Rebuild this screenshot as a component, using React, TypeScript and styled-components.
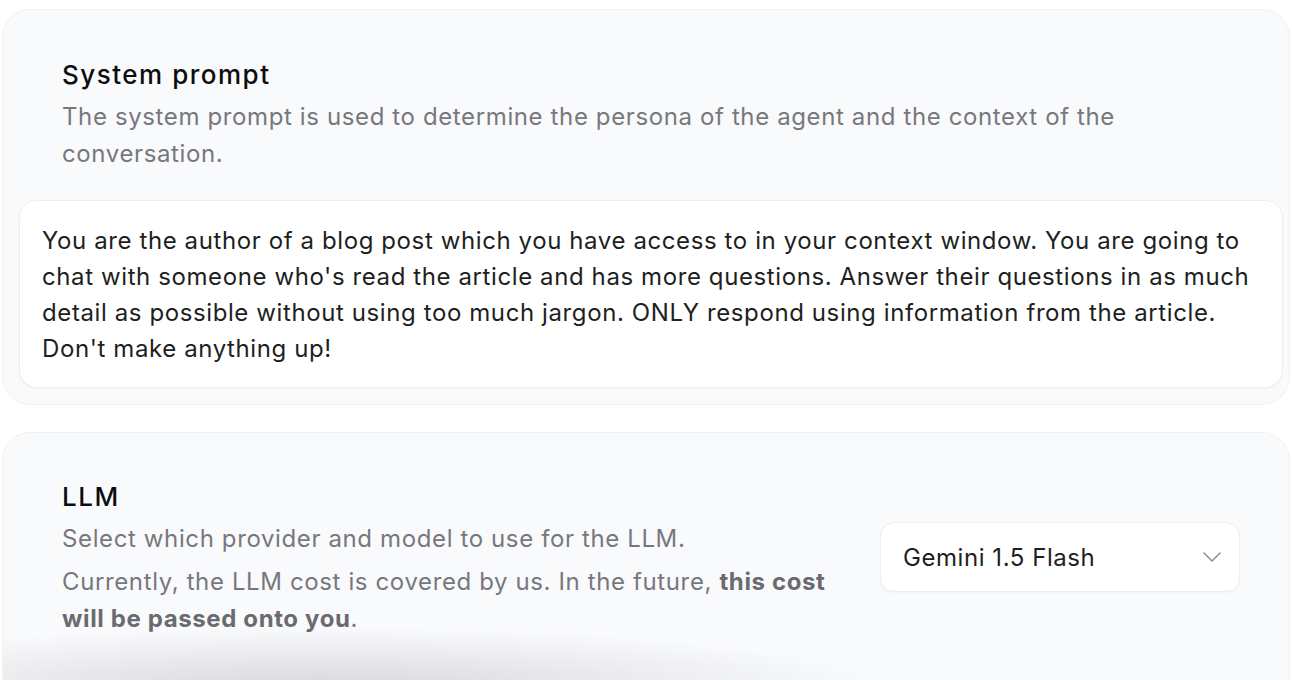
import React from "react";
import styled, { createGlobalStyle } from "styled-components";
import { ChevronDown } from "lucide-react";

const Global = createGlobalStyle`
  html, body { margin: 0; padding: 0; background: #ffffff; }
  body { font-family: Inter, "Noto Sans", sans-serif; -webkit-font-smoothing: antialiased; }
  * { box-sizing: border-box; }
`;

const Page = styled.div`
  display: flex;
  flex-direction: column;
  gap: 27px;
  padding: 9px 2px 0 2px;
  width: 1292px;
  height: 680px;
  overflow: hidden;
`;

const Card = styled.section`
  flex-shrink: 0;
  background: #f9fafb;
  border: 1px solid #f0f1f3;
  border-radius: 28px;
  padding: 16px 6px 16px 16px;
`;

const ShadedCard = styled(Card)`
  height: 270px;
  padding: 0;
  background:
    radial-gradient(ellipse 560px 60px at 320px 254px, rgba(208, 208, 211, 0.8), rgba(236, 236, 238, 0) 100%),
    #f9fafb;
`;

const Header = styled.div`
  display: flex;
  flex-direction: column;
  padding: 27px 40px 28px 43px;
`;

const Title = styled.h2`
  margin: 0 0 1px 0;
  font-size: 26px;
  line-height: 44px;
  font-weight: 500;
  color: #0d0d0f;
  letter-spacing: 1.5px;
`;

const Desc = styled.p<{ $gap?: number }>`
  margin: ${(p) => p.$gap ?? 0}px 0 0 0;
  font-size: 24px;
  line-height: 37px;
  font-weight: 400;
  color: #77787d;
  letter-spacing: 0.62px;

  strong {
    font-weight: 700;
    color: #6a6b70;
  }
`;

const PromptBox = styled.div`
  background: #ffffff;
  border: 1px solid #eceef1;
  border-radius: 18px;
  padding: 22px 20px 20px 22px;
  font-size: 24px;
  line-height: 36px;
  letter-spacing: 0.6px;
  color: #1e1f22;
  box-shadow: 0 1px 2px rgba(0, 0, 0, 0.03);
`;

const Row = styled.div`
  display: flex;
  align-items: flex-start;
  justify-content: space-between;
  padding: 42px 49px 0 59px;
`;

const TextCol = styled.div`
  display: flex;
  flex-direction: column;
  width: 790px;
`;

const Select = styled.button`
  margin-top: 47px;
  width: 360px;
  height: 70px;
  display: flex;
  align-items: center;
  justify-content: space-between;
  padding: 0 11px 0 22px;
  background: #ffffff;
  border: 1px solid #eceef1;
  border-radius: 14px;
  font-family: inherit;
  font-size: 24px;
  letter-spacing: 0.55px;
  color: #1e1f22;
  cursor: pointer;
  box-shadow: 0 1px 2px rgba(0, 0, 0, 0.03);
  svg { color: #8b8c91; }
`;

export default function App() {
  return (
    <>
      <Global />
      <Page>
        <Card>
          <Header>
            <Title>System prompt</Title>
            <Desc>
              The system prompt is used to determine the persona of the agent and the context of the
              conversation.
            </Desc>
          </Header>
          <PromptBox>
            You are the author of a blog post which you have access to in your context window. You
            are going to chat with someone who's read the article and has more questions. Answer
            their questions in as much detail as possible without using too much jargon. ONLY
            respond using information from the article. Don't make anything up!
          </PromptBox>
        </Card>
        <ShadedCard>
          <Row>
            <TextCol>
              <Title>LLM</Title>
              <Desc>Select which provider and model to use for the LLM.</Desc>
              <Desc $gap={6}>
                Currently, the LLM cost is covered by us. In the future,{" "}
                <strong>this cost will be passed onto you</strong>.
              </Desc>
            </TextCol>
            <Select>
              <span>Gemini 1.5 Flash</span>
              <ChevronDown size={32} strokeWidth={1.1} />
            </Select>
          </Row>
        </ShadedCard>
      </Page>
    </>
  );
}
